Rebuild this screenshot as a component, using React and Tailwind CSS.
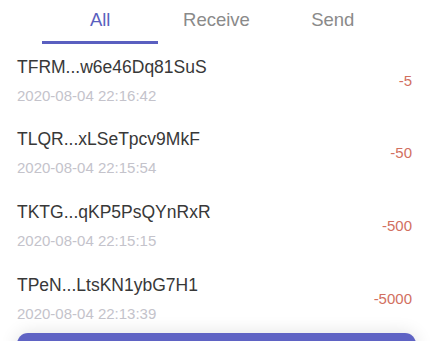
import React, { useState } from 'react';

const records = [
  { addr: 'TFRM...w6e46Dq81SuS', time: '2020-08-04 22:16:42', amount: '-5' },
  { addr: 'TLQR...xLSeTpcv9MkF', time: '2020-08-04 22:15:54', amount: '-50' },
  { addr: 'TKTG...qKP5PsQYnRxR', time: '2020-08-04 22:15:15', amount: '-500' },
  { addr: 'TPeN...LtsKN1ybG7H1', time: '2020-08-04 22:13:39', amount: '-5000' },
];

const tabs = ['All', 'Receive', 'Send'];

export default function App() {
  const [active, setActive] = useState('All');

  return (
    <div className="w-[433px] bg-white font-['Liberation_Sans',Arial,sans-serif] overflow-hidden h-[341px]">
      {/* Tabs */}
      <div className="flex mx-[42px] h-[44px]">
        {tabs.map((t) => (
          <button
            key={t}
            type="button"
            onClick={() => setActive(t)}
            className="flex-1 flex flex-col items-center"
          >
            <span
              className={
                'pt-[9px] text-[18.5px] leading-[21px] ' +
                (active === t ? 'text-[#5a5fc0]' : 'text-[#8a8a8a]')
              }
            >
              {t}
            </span>
            <span
              className={
                'mt-auto h-[3px] w-full ' + (active === t ? 'bg-[#5a5fc0]' : 'bg-transparent')
              }
            />
          </button>
        ))}
      </div>

      {/* Records */}
      <div>
        {records.map((r) => (
          <div key={r.addr} className="flex items-center justify-between pl-[17px] pr-[21px] py-[12.8px]">
            <div>
              <div className="text-[17.5px] leading-[20px] text-[#383838]">{r.addr}</div>
              <div className="mt-[10px] text-[15px] leading-[17px] text-[#c4c3cb]">{r.time}</div>
            </div>
            <div className="text-[15px] leading-[17px] text-[#d2705f]">{r.amount}</div>
          </div>
        ))}
      </div>

      {/* Footer button */}
      <div className="px-[17px] -mt-[1px]">
        <button
          type="button"
          className="w-full h-[48px] rounded-[11px] bg-[#5f63c4] shadow-[0_0_18px_rgba(0,0,0,0.12)]"
        />
      </div>
    </div>
  );
}
